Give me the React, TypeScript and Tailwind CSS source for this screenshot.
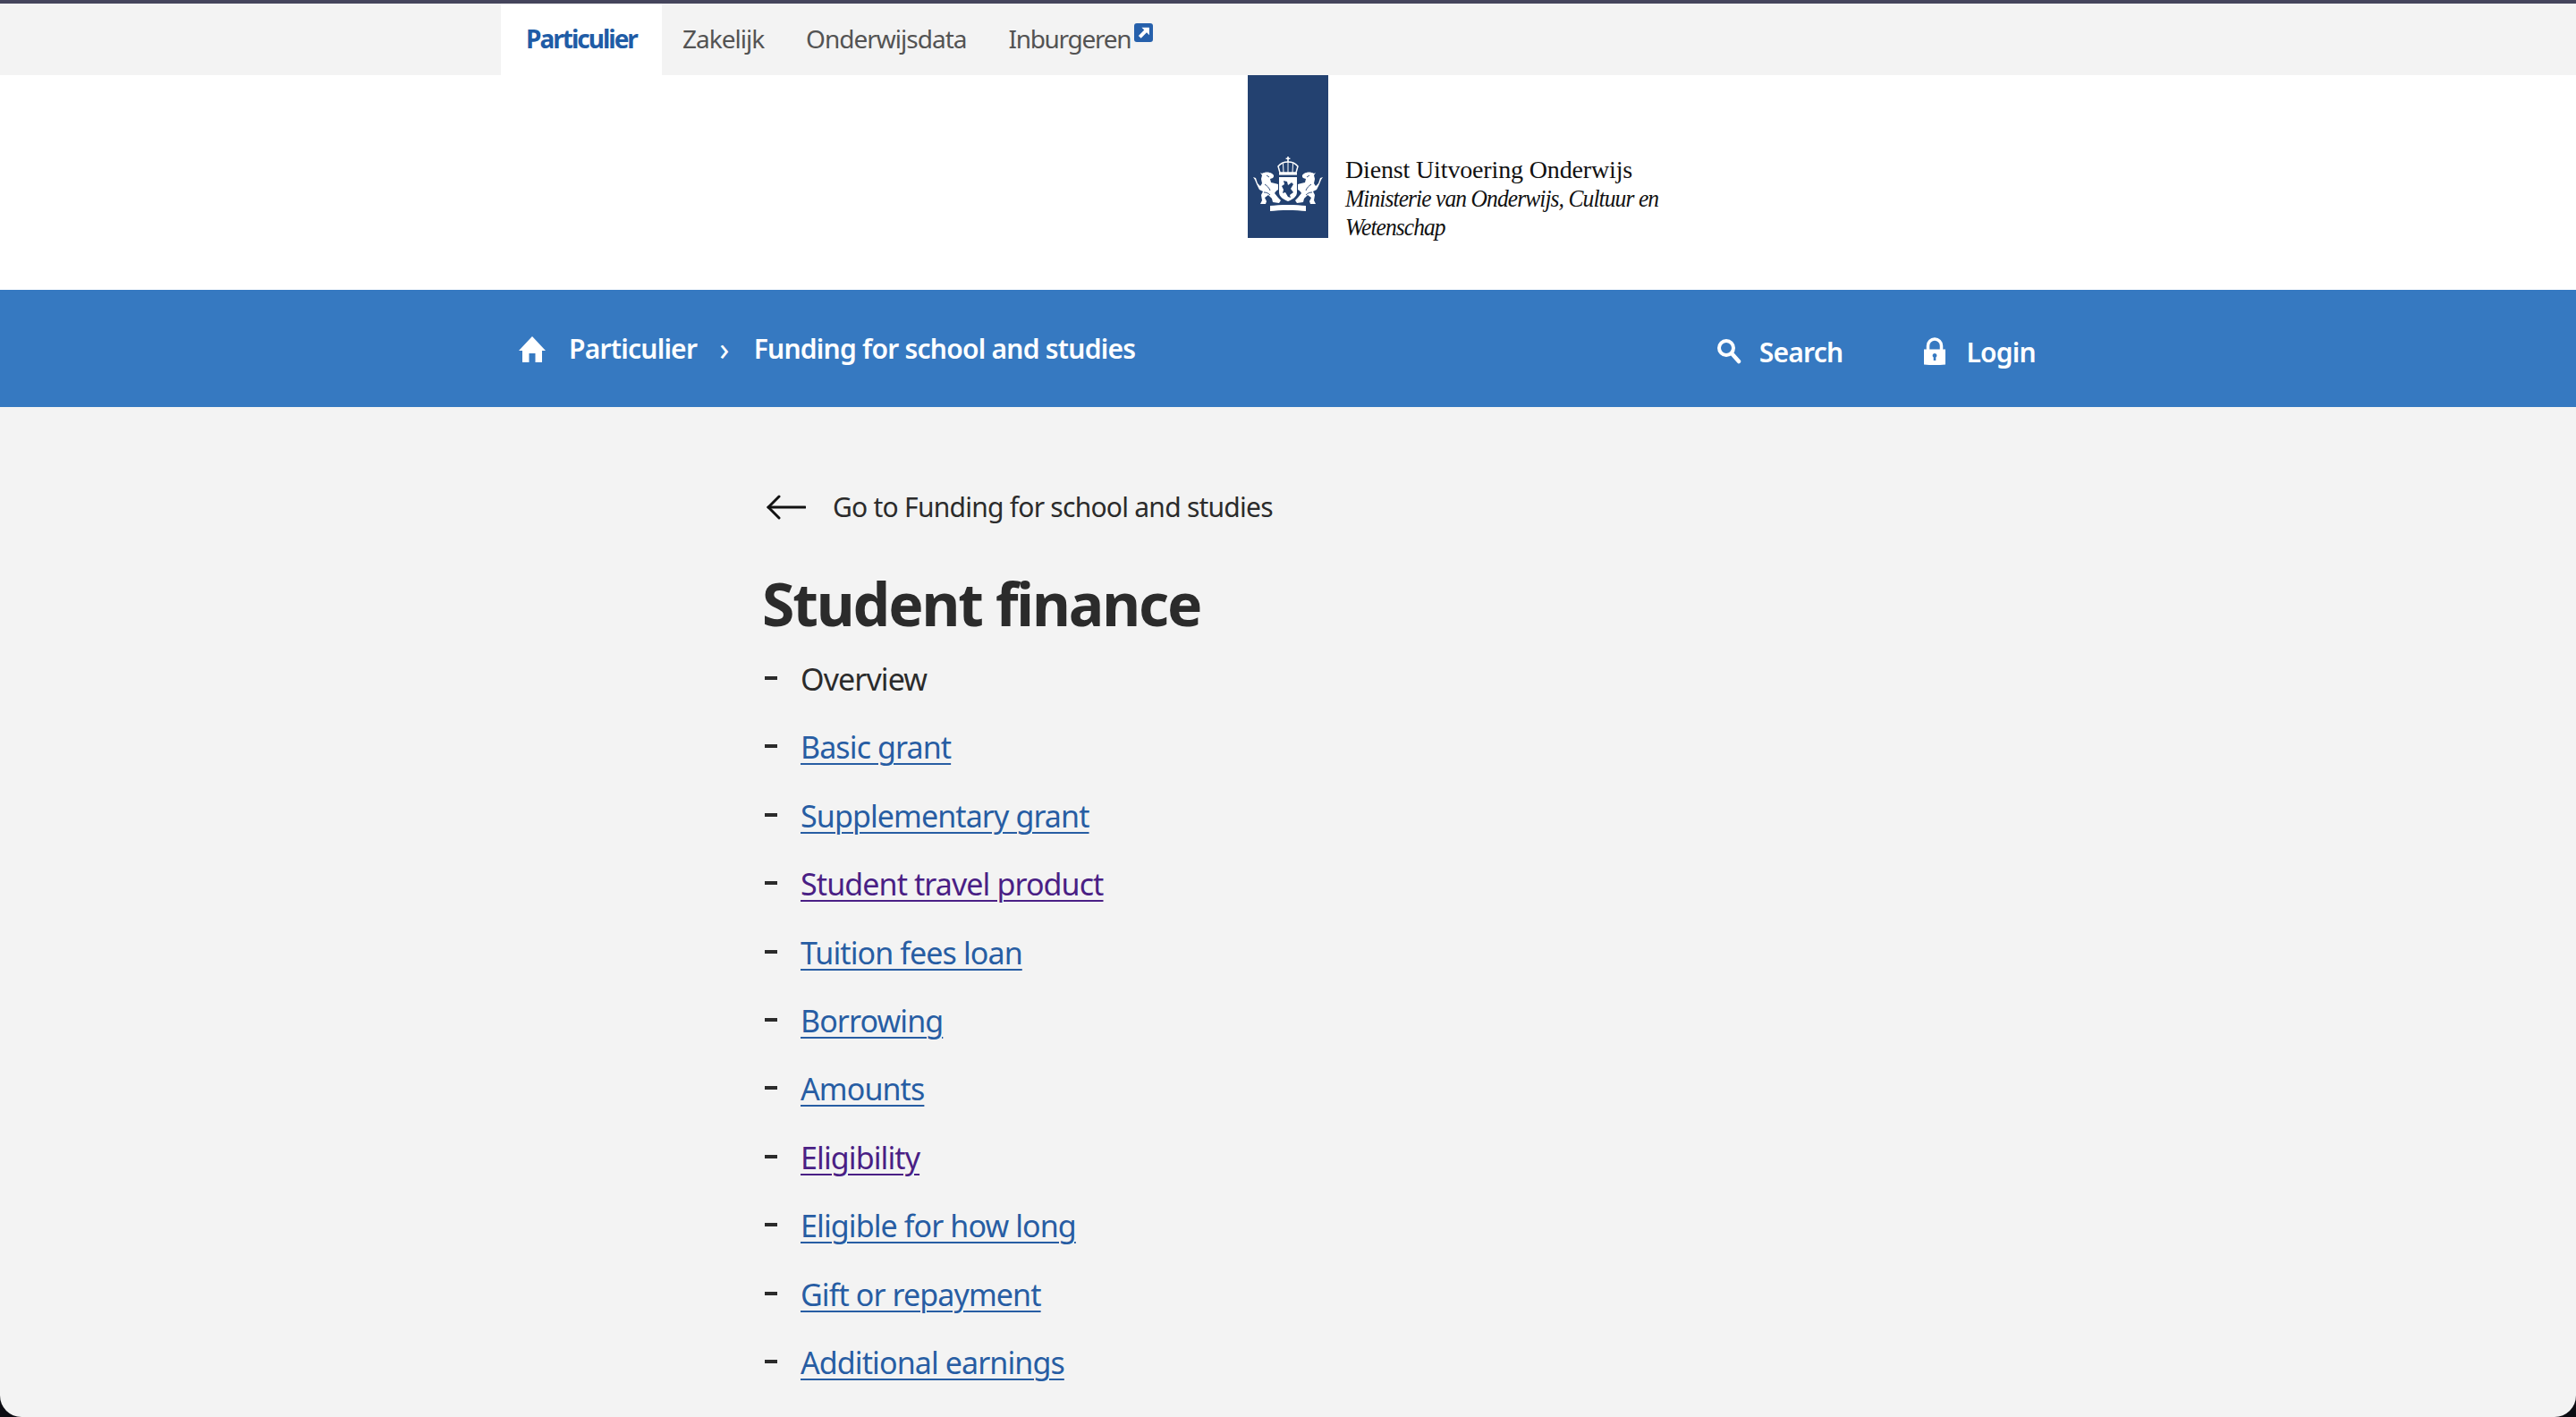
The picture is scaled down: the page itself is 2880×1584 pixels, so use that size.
const links = [
  { label: "Basic grant" },
  { label: "Supplementary grant" },
  { label: "Student travel product", visited: true },
  { label: "Tuition fees loan" },
  { label: "Borrowing" },
  { label: "Amounts" },
  { label: "Eligibility", visited: true },
  { label: "Eligible for how long" },
  { label: "Gift or repayment" },
  { label: "Additional earnings" },
];

function Lion() {
  return (
    <g>
      <path d="M10 19c3-2 8-2 11 0 2 1 3 3 1 5l-3 1 1 4c3 1 6 1 8 2v6c-2 1-3 2-4 4l4 5 3 3-2 3-7-1-1-4-4-4-4 3 2 4-1 3H8l2-4-1-6 2-4-4-2-3-6-2-5-2-3 3 1 2 6 3 3 2-3-1-5 1-4-2-3z" />
      <path d="M13 31c3 2 5 4 6 7M12 40c3 0 5 1 7 3M15 21l3 2" fill="none" stroke="#234170" strokeWidth="0.9" />
    </g>
  );
}

function Crest() {
  return (
    <svg viewBox="0 0 78 64" className="w-[78px] h-[64px]" fill="#fff">
      {/* crown */}
      <rect x="38.2" y="0" width="1.6" height="6" />
      <rect x="36.6" y="1.6" width="4.8" height="1.4" />
      <path d="M28 11c3-4 7-5 11-5s8 1 11 5l-2 7H30z" fill="none" stroke="#fff" strokeWidth="1.5" />
      <path d="M39 6v12M33.500 8l.5 10M44.500 8l-.5 10" stroke="#fff" strokeWidth="1" />
      <rect x="29" y="18" width="20" height="2.6" />
      {/* shield */}
      <path d="M29 23h20v17c0 5-5 8-10 10-5-2-10-5-10-10z" />
      <path d="M34 27l4 1 1 4 4-3 2 2-3 5 3 4-4 3 1 3-3-1-3-5-3 1 1-4-2-4 3-2z" fill="#234170" />
      <Lion />
      <g transform="translate(78 0) scale(-1 1)">
        <Lion />
      </g>
      {/* ribbon */}
      <path d="M19 55c10-1.500 30-1.500 40 0v6c-10-1.500-30-1.500-40 0z" />
    </svg>
  );
}

export default function App() {
  return (
    <div className="h-screen overflow-hidden bg-[#0c0c12] font-['Noto_Sans','Open_Sans',sans-serif]">
      <div className="h-full overflow-hidden rounded-b-[24px] bg-[#f3f3f3]">
        <div className="h-[4px] bg-[#45455c]" />

        <nav className="h-[80px] flex pl-[560px] pb-[2px] text-[28px] text-[#535353] tracking-[-1px]">
          <a className="w-[180px] -mb-[2px] pb-[2px] flex items-center justify-center bg-white font-bold text-[#1f5ca6] tracking-[-2px]">Particulier</a>
          <a className="ml-[23px] flex items-center">Zakelijk</a>
          <a className="ml-[47px] flex items-center">Onderwijsdata</a>
          <a className="ml-[47px] flex items-center tracking-[-1.300px]">
            Inburgeren
            <span className="ml-[4px] mb-[14px] w-[21px] h-[21px] rounded-[3px] bg-[#2660ab] flex items-center justify-center">
              <svg viewBox="0 0 16 16" className="w-[17px] h-[17px]" fill="#fff">
                <path d="M6 2.500h8v8l-2.700-2.700-6 6-2.600-2.600 6-6z" />
              </svg>
            </span>
          </a>
        </nav>

        <header className="h-[240px] bg-white flex pl-[1395px]">
          <div className="w-[90px] h-[182px] bg-[#234170] flex items-end justify-center pb-[27px]">
            <Crest />
          </div>
          <div className="ml-[19px] mt-[90px] text-[#111] font-['Liberation_Serif',serif] text-[28px] leading-[32px]">
            <div className="tracking-[-0.15px]">Dienst Uitvoering Onderwijs</div>
            <div className="italic tracking-[-1px] w-[400px] origin-left scale-x-[0.91]">Ministerie van Onderwijs, Cultuur en Wetenschap</div>
          </div>
        </header>

        <div className="h-[131px] bg-[#3679c1] flex items-center justify-between pl-[579px] pr-[604px] text-white font-semibold text-[30px] tracking-[-0.75px]">
          <div className="flex items-center">
            <svg viewBox="0 0 32 32" className="w-[32px] h-[32px]" fill="#fff">
              <path d="M16 2L31 18h-4v13h-7.500V21h-7v10H5V18H1z" />
            </svg>
            <a className="ml-[25px]">Particulier</a>
            <span className="ml-[25px] mr-[28px] text-[36px] leading-none font-normal">›</span>
            <a>Funding for school and studies</a>
          </div>
          <div className="flex items-center mt-[7px]">
            <svg viewBox="0 0 28 30" className="w-[28px] h-[30px]" fill="none" stroke="#fff">
              <circle cx="11" cy="11" r="8" strokeWidth="4" />
              <path d="M17 17l8 9" strokeWidth="4.500" strokeLinecap="round" />
            </svg>
            <a className="ml-[20px]">Search</a>
            <svg viewBox="0 0 26 32" className="ml-[90px] w-[26px] h-[32px]" fill="#fff">
              <path d="M5.500 14V9.500a7.500 7.500 0 0 1 15 0V14" fill="none" stroke="#fff" strokeWidth="3.500" />
              <path fillRule="evenodd" d="M1 13.500h24V30.500q-12 1-24 0zM13 18a2.500 2.500 0 0 0-1.300 4.600V26h2.600v-3.400A2.500 2.500 0 0 0 13 18z" />
            </svg>
            <a className="ml-[22px]">Login</a>
          </div>
        </div>

        <main className="pl-[852px] pt-[90px] text-[#2b2b2b]">
          <a className="flex items-center text-[30px] tracking-[-0.75px] leading-[44px]">
            <svg viewBox="0 0 44 28" className="w-[44px] h-[28px] ml-[5px]" fill="none" stroke="#111" strokeWidth="3" strokeLinecap="round">
              <path d="M43 14H2" />
              <path d="M14 2L2 14l12 12" />
            </svg>
            <span className="ml-[30px]">Go to Funding for school and studies</span>
          </a>
          <h1 className="mt-[45px] text-[66px] leading-[80px] font-bold tracking-[-2.1px]">Student finance</h1>
          <ul className="mt-[22px] text-[34px] tracking-[-0.9px]">
            <li className="h-[76.4px] flex items-start">
              <span className="w-[14px] h-[4px] ml-[3px] mt-[20px] bg-[#2b2b2b]" />
              <span className="ml-[26px] leading-[46px]">Overview</span>
            </li>
            {links.map((l) => (
              <li key={l.label} className="h-[76.4px] flex items-start">
                <span className="w-[14px] h-[4px] ml-[3px] mt-[20px] bg-[#2b2b2b]" />
                <a className={"ml-[26px] leading-[46px] underline underline-offset-[5px] decoration-2 " + (l.visited ? "text-[#4a1f85]" : "text-[#275da3]")}>
                  {l.label}
                </a>
              </li>
            ))}
          </ul>
        </main>
      </div>
    </div>
  );
}
